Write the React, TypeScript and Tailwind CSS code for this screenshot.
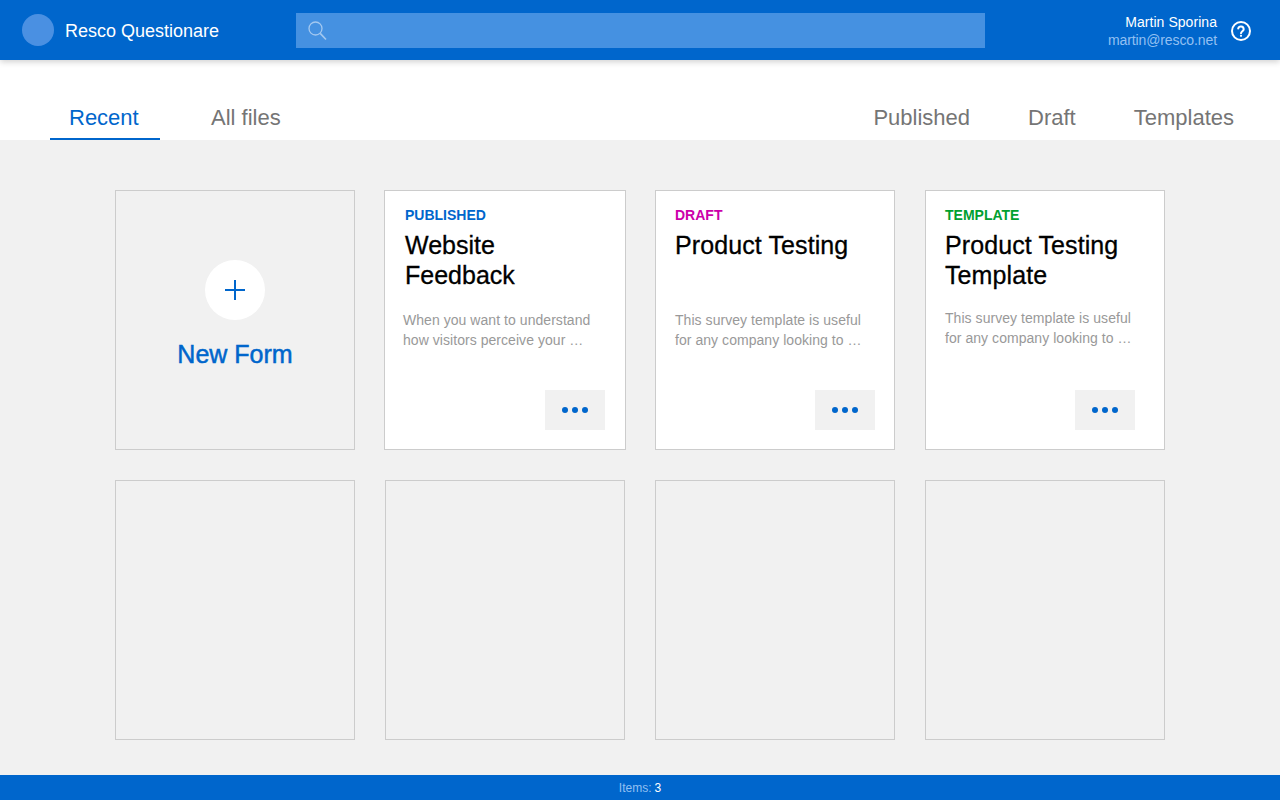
import React from "react";

const font = "font-['Liberation_Sans',Arial,sans-serif]";

function MoreButton({ className }: { className: string }) {
  return (
    <button className={`w-[60px] h-10 bg-[#f1f1f1] flex items-center justify-center gap-1 self-end mt-auto ${className}`}>
      <span className="w-[6px] h-[6px] rounded-full bg-[#0066cc]" />
      <span className="w-[6px] h-[6px] rounded-full bg-[#0066cc]" />
      <span className="w-[6px] h-[6px] rounded-full bg-[#0066cc]" />
    </button>
  );
}

function Tab({ label, active }: { label: string; active?: boolean }) {
  return (
    <div className={active ? "w-[110px] h-[60px] pt-[23px] pl-[19px] text-[22px] leading-[30px] text-[#0066cc] border-b-2 border-[#0066cc]" : "h-[60px] pt-[23px] text-[22px] leading-[30px] text-[#757575]"}>
      {label}
    </div>
  );
}

function EmptyCard() {
  return <div className="w-[240px] h-[260px] border border-[#cccccc]" />;
}

export default function App() {
  return (
    <div className={`h-screen w-full flex flex-col bg-[#f1f1f1] overflow-hidden antialiased ${font}`}>
      <header className="relative z-10 h-[60px] shrink-0 bg-[#0066cc] shadow-[0_2px_6px_rgba(0,0,0,0.18)] flex items-center pl-[22px] pr-[28px]">
        <div className="w-8 h-8 rounded-full bg-[#4a90e2]" />
        <div className="ml-[11px] mt-[2px] w-[231px] text-[18px] text-white">Resco Questionare</div>
        <div className="w-[689px] h-[35px] mt-px bg-[#4591e1] flex items-center pl-3">
          <svg width="19" height="20" viewBox="0 0 19 20" fill="none" stroke="#a3c8f0" strokeWidth="1.3">
            <circle cx="7.5" cy="7.5" r="6.5" />
            <path d="M12.2 12.4 18 18.5" strokeWidth="1.6" />
          </svg>
        </div>
        <div className="ml-auto mt-[2px] text-right">
          <div className="text-[14px] leading-[18px] tracking-[0.05px] text-white">Martin Sporina</div>
          <div className="text-[14px] leading-[18px] tracking-[-0.1px] text-[#93c0f2]">martin@resco.net</div>
        </div>
        <svg className="ml-[13px] mt-[2px]" width="22" height="22" viewBox="0 0 22 22" fill="none" stroke="white" strokeWidth="2">
          <circle cx="11" cy="11" r="9" />
          <path d="M8.2 8.6a2.8 2.8 0 0 1 5.5.6c0 1.8-2.7 2.2-2.7 4" strokeLinecap="round" />
          <circle cx="11" cy="15.8" r="1.1" fill="white" stroke="none" />
        </svg>
      </header>

      <nav className="h-20 shrink-0 bg-white flex items-start pt-5 pl-[50px] pr-[46px]">
        <Tab label="Recent" active />
        <div className="ml-[51px]"><Tab label="All files" /></div>
        <div className="ml-auto flex gap-[58px]">
          <Tab label="Published" />
          <Tab label="Draft" />
          <Tab label="Templates" />
        </div>
      </nav>

      <main className="flex-1 pt-[50px] pl-[115px]">
        <div className="grid grid-cols-[repeat(4,240px)] auto-rows-[260px] gap-[30px]">
          <div className="border border-[#cccccc] flex flex-col items-center pt-[69px]">
            <div className="w-[60px] h-[60px] rounded-full bg-white flex items-center justify-center">
              <svg width="20" height="20" viewBox="0 0 20 20" stroke="#0066cc" strokeWidth="2">
                <path d="M0 10h20M10 0v20" />
              </svg>
            </div>
            <div className="mt-[19px] text-[25px] leading-[30px] [-webkit-text-stroke:0.5px_#0066cc] text-[#0066cc]">New Form</div>
          </div>

          <div className="-mx-px bg-white border border-[#cccccc] flex flex-col px-5 pt-[14px] pb-[19px]">
            <div className="text-[14px] leading-5 font-bold text-[#0066cc]">PUBLISHED</div>
            <div className="mt-[5px] h-[60px] text-[25px] leading-[30px] text-black [-webkit-text-stroke:0.3px_black]">Website<br />Feedback</div>
            <div className="mt-5 -ml-[2px] text-[14px] leading-5 tracking-[0.05px] text-[#999999]">When you want to understand<br />how visitors perceive your …</div>
            <MoreButton className="" />
          </div>

          <div className="bg-white border border-[#cccccc] flex flex-col px-[19px] pt-[14px] pb-[19px]">
            <div className="text-[14px] leading-5 font-bold text-[#cc00aa]">DRAFT</div>
            <div className="mt-[5px] h-[60px] text-[25px] leading-[30px] tracking-[0.1px] text-black [-webkit-text-stroke:0.3px_black]">Product Testing</div>
            <div className="mt-5 text-[14px] leading-5 tracking-[0.05px] text-[#999999]">This survey template is useful<br />for any company looking to …</div>
            <MoreButton className="" />
          </div>

          <div className="bg-white border border-[#cccccc] flex flex-col px-[19px] pt-[14px] pb-[19px]">
            <div className="text-[14px] leading-5 font-bold text-[#00a030]">TEMPLATE</div>
            <div className="mt-[5px] h-[60px] text-[25px] leading-[30px] tracking-[0.1px] text-black [-webkit-text-stroke:0.3px_black]">Product Testing<br />Template</div>
            <div className="mt-[18px] text-[14px] leading-5 tracking-[0.05px] text-[#999999]">This survey template is useful<br />for any company looking to …</div>
            <MoreButton className="mr-[10px]" />
          </div>

          <EmptyCard />
          <EmptyCard />
          <EmptyCard />
          <EmptyCard />
        </div>
      </main>

      <footer className="h-[25px] shrink-0 bg-[#0066cc] flex items-center justify-center gap-[3px] text-[12px] pt-px">
        <span className="text-[#93c0f2]">Items:</span>
        <span className="text-white">3</span>
      </footer>
    </div>
  );
}
